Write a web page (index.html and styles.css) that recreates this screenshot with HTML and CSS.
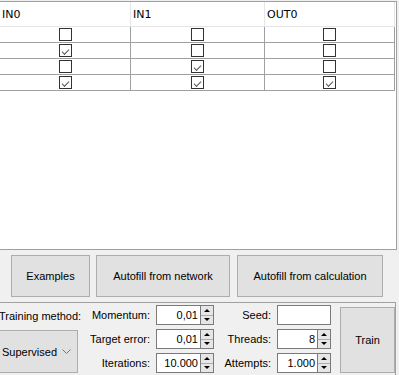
FILE: index.html
```html
<!DOCTYPE html>
<html lang="en">
<head>
  <meta charset="UTF-8" />
  <title>Training</title>
  <link rel="stylesheet" href="styles.css">
</head>
<body>
  <div class="grid">
    <table class="truth">
      <thead>
        <tr><th class="c1">IN0</th><th class="c2">IN1</th><th class="c3">OUT0</th></tr>
      </thead>
      <tbody>
        <tr><td><span class="check"></span></td><td><span class="check"></span></td><td><span class="check"></span></td></tr>
        <tr><td><span class="check on"></span></td><td><span class="check"></span></td><td><span class="check"></span></td></tr>
        <tr><td><span class="check"></span></td><td><span class="check on"></span></td><td><span class="check"></span></td></tr>
        <tr><td><span class="check on"></span></td><td><span class="check on"></span></td><td><span class="check on"></span></td></tr>
      </tbody>
    </table>
  </div>

  <div class="actions">
    <button class="btn btn-examples">Examples</button>
    <button class="btn btn-network">Autofill from network</button>
    <button class="btn btn-calc">Autofill from calculation</button>
  </div>

  <div class="training">
    <div class="method">
      <span class="lbl">Training method:</span>
      <div class="combo">
        <span>Supervised</span>
        <svg width="9" height="6" viewBox="0 0 9 6"><path d="M0.5 0.5 L4.5 4.5 L8.5 0.5" fill="none" stroke="#777" stroke-width="1"/></svg>
      </div>
    </div>

    <div class="params p1">
      <span class="lbl">Momentum:</span>
      <div class="spin"><span class="edit">0,01</span><span class="arrows"><i class="up"></i><i class="down"></i></span></div>
      <span class="lbl">Target error:</span>
      <div class="spin"><span class="edit">0,01</span><span class="arrows"><i class="up"></i><i class="down"></i></span></div>
      <span class="lbl">Iterations:</span>
      <div class="spin"><span class="edit">10.000</span><span class="arrows"><i class="up"></i><i class="down"></i></span></div>
    </div>

    <div class="params p2">
      <span class="lbl">Seed:</span>
      <div class="field"></div>
      <span class="lbl">Threads:</span>
      <div class="spin"><span class="edit">8</span><span class="arrows"><i class="up"></i><i class="down"></i></span></div>
      <span class="lbl">Attempts:</span>
      <div class="spin"><span class="edit">1.000</span><span class="arrows"><i class="up"></i><i class="down"></i></span></div>
    </div>

    <button class="btn btn-train">Train</button>
  </div>
</body>
</html>
```

FILE: styles.css
```css
body {
  margin: 0;
  width: 399px;
  height: 375px;
  overflow: hidden;
  background: #f0f0f0;
  color: #000;
  font-family: "Liberation Sans", Arial, sans-serif;
  font-size: 11px;
}

.grid {
  margin-top: 1px;
  width: 396px;
  height: 247px;
  background: #fff;
  border-top: 1px solid #a0a0a0;
  border-right: 1px solid #a0a0a0;
  border-bottom: 1px solid #a0a0a0;
}

.truth {
  border-collapse: collapse;
  table-layout: fixed;
  width: 395px;
}

.truth th {
  height: 24px;
  padding: 0 0 0 2px;
  font-family: "DejaVu Sans", sans-serif;
  font-size: 11px;
  font-weight: normal;
  text-align: left;
  border-right: 1px solid #e5e5e5;
  border-bottom: 1px solid #e5e5e5;
}

.truth .c1 { width: 128px; }
.truth .c2 { width: 131px; }

.truth td {
  height: 15px;
  padding: 0;
  text-align: center;
  border-right: 1px solid #a0a0a0;
  border-bottom: 1px solid #a0a0a0;
  line-height: 0;
}

.check {
  display: inline-block;
  width: 11px;
  height: 11px;
  border: 1px solid #333;
  background: #fff;
  position: relative;
}

.check.on::after {
  content: "";
  position: absolute;
  left: 3px;
  top: 1px;
  width: 6px;
  height: 3px;
  border-left: 1px solid #555;
  border-bottom: 1px solid #555;
  transform: translate(-1px, 3px) rotate(-45deg);
}

.btn {
  font: inherit;
  color: #000;
  background: #e1e1e1;
  border: 1px solid #adadad;
  padding: 0;
}

.actions {
  display: flex;
  padding: 5px 0 0 11px;
  height: 42px;
}

.actions .btn { height: 42px; }
.btn-examples { width: 79px; }
.btn-network { width: 134px; margin-left: 6px; }
.btn-calc { width: 146px; margin-left: 7px; }

.training {
  margin-top: 5px;
  width: 395px;
  height: 73px;
  border-top: 1px solid #a0a0a0;
  border-right: 1px solid #a0a0a0;
  display: flex;
  align-items: flex-start;
}

.method {
  width: 80px;
  display: flex;
  flex-direction: column;
}

.method .lbl {
  height: 27px;
  line-height: 26px;
  margin-left: -1px;
  text-align: left;
  white-space: nowrap;
}

.combo {
  width: 78px;
  height: 43px;
  background: #e1e1e1;
  border: 1px solid #adadad;
  border-left: none;
  display: flex;
  align-items: center;
  justify-content: space-between;
  padding: 0 6px 0 2px;
  box-sizing: border-box;
}

.params {
  display: grid;
  row-gap: 4px;
  column-gap: 6px;
  padding-top: 2px;
  align-items: center;
}

.p1 { grid-template-columns: 70px 58px; }
.p2 { grid-template-columns: 50px 54px; margin-left: 7px; }

.lbl {
  text-align: right;
  white-space: nowrap;
}

.spin, .field {
  height: 20px;
  display: flex;
  background: #fff;
  box-sizing: border-box;
}

.field {
  border: 1px solid #7a7a7a;
}

.spin .edit {
  flex: 1;
  border: 1px solid #7a7a7a;
  border-right: none;
  text-align: right;
  line-height: 18px;
  padding-right: 2px;
}

.arrows {
  width: 12px;
  display: flex;
  flex-direction: column;
  border: 1px solid #7a7a7a;
  background: #f0f0f0;
}

.arrows i {
  flex: 1;
  display: flex;
  align-items: center;
  justify-content: center;
  background: #e6e6e6;
}

.arrows .up { border-bottom: 1px solid #adadad; }

.arrows i::before {
  content: "";
  border-left: 3px solid transparent;
  border-right: 3px solid transparent;
}

.arrows .up::before { border-bottom: 3px solid #000; }
.arrows .down::before { border-top: 3px solid #000; }

.btn-train {
  width: 55px;
  height: 66px;
  margin: 4px 0 0 9px;
}
```
